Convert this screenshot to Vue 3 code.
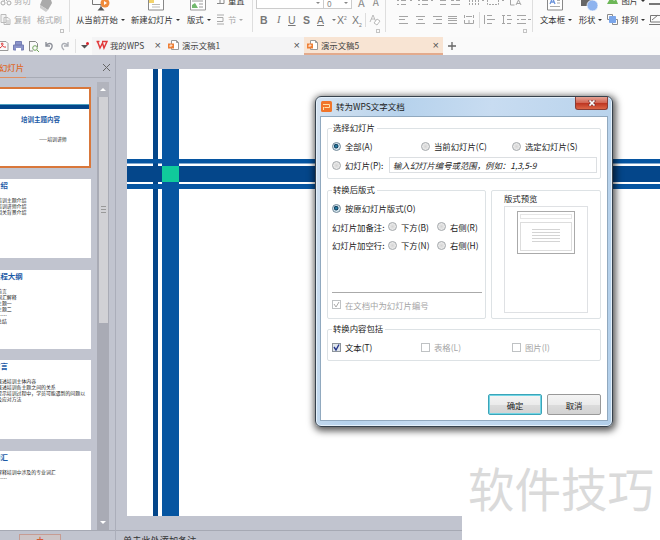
<script setup>
import { ref } from 'vue';

const range = ref('all');
const layout = ref('origin');
const includeText = ref(true);

const ranges = [
    { id: 'all', label: '全部(A)' },
    { id: 'current', label: '当前幻灯片(C)' },
    { id: 'selected', label: '选定幻灯片(S)' },
];

const placements = [
    { title: '幻灯片加备注:', options: ['下方(B)', '右侧(R)'] },
    { title: '幻灯片加空行:', options: ['下方(N)', '右侧(H)'] },
];

const thumbs = [
    { title: '介绍', lines: ['培训主题介绍', '培训讲师介绍', '相关背景介绍'] },
    { title: '课程大纲', lines: ['前言', '词汇解释', '主题一', '主题二', '……', '总结'] },
    { title: '前言', lines: ['概述培训主体内容', '概述培训各主题之间的关系', '提示培训过程中，学员可能遇到的问题以', '及应对方法'] },
    { title: '词汇', lines: ['解释培训中涉及的专业词汇', '……'] },
];
</script>

<template>
    <div class="app">
        <header class="ribbon">
            <section class="group clip">
                <div class="small-col">
                    <div class="small-item muted">
                        <svg width="12" height="12" viewBox="0 0 12 12" fill="none" stroke="#aaa">
                            <path d="M4 7 9 0M7 7 2 0" /><circle cx="3" cy="9" r="2" /><circle cx="9" cy="9" r="2" />
                        </svg>
                        <span>剪切</span>
                    </div>
                    <div class="small-item muted">
                        <svg width="12" height="12" viewBox="0 0 12 12" fill="none" stroke="#bbb">
                            <path d="M1 1.500h5v8H1zM4 4.500h4l2 2v5H4zM6 8h3M6 10h3" fill="#f4f4f4" />
                        </svg>
                        <span>复制</span>
                    </div>
                </div>
                <div class="big-item muted painter">
                    <svg width="20" height="13" viewBox="0 0 20 13">
                        <path d="M5 0h9l1 3-4 7-8-5z" fill="#aaa" /><path d="m3 5 8 5-2 2-6-4z" fill="#ccc" />
                    </svg>
                    <span>格式刷</span>
                </div>
                <i class="launcher"></i>
            </section>

            <section class="group slides">
                <div class="big-item start">
                    <svg width="24" height="13" viewBox="0 0 24 13">
                        <path d="M2.500 0v4.500h14M11 4v4" fill="none" stroke="#777" /><path d="m7.500 10.500 3.500-4 3.500 4z" fill="#555" />
                        <circle cx="15" cy="3" r="4.500" fill="#ef8b3c" /><path d="M14 1v4l3-2z" fill="#fff" />
                    </svg>
                    <span>从当前开始<b class="caret"></b></span>
                </div>
                <div class="big-item new-slide">
                    <svg width="18" height="13" viewBox="0 0 18 13" fill="none">
                        <path d="M1.500-2v12h15V-2" stroke="#888" fill="#fff" /><path d="M2 0h5v3H2z" fill="#f3d36b" /><path d="M5 4.500h8M5 7h8" stroke="#bbb" />
                    </svg>
                    <span>新建幻灯片<b class="caret"></b></span>
                </div>
                <div class="big-item layout-btn">
                    <svg width="18" height="13" viewBox="0 0 18 13" fill="none">
                        <path d="M1.500-2v12h15V-2" stroke="#999" fill="#fff" /><path d="M3 8V5l3-2 3 5z" fill="#72b96d" /><path d="M3 1h11M10 4h4M10 7h4" stroke="#9a9a9a" />
                    </svg>
                    <span>版式<b class="caret"></b></span>
                </div>
                <div class="small-col">
                    <div class="small-item">
                        <svg width="9" height="12" viewBox="0 0 9 12" fill="none" stroke="#888"><path d="M0 1.500h7v8H0M0 5h7M3 2v8" /></svg>
                        <span>重置</span>
                    </div>
                    <div class="small-item muted">
                        <svg width="9" height="12" viewBox="0 0 9 12" fill="none" stroke="#aaa"><path d="M0 2h7M0 4.500h6v4H0M0 11h7" /></svg>
                        <span>节<b class="caret"></b></span>
                    </div>
                </div>
            </section>

            <section class="group font">
                <div class="font-top">
                    <span class="combo family"><b class="caret"></b></span>
                    <span class="combo size">0<b class="caret"></b></span>
                    <span class="letter">A</span>
                    <span class="letter small">A</span>
                </div>
                <div class="font-row">
                    <b>B</b><i class="serif">I</i><u>U</u><b>S</b><u>A</u><b class="caret"></b>
                    <span>X<sup>2</sup></span><span>X<sub>2</sub></span>
                    <svg width="18" height="14" viewBox="0 0 18 14" fill="none" stroke="#bbb">
                        <path d="M1.500 0v14" stroke="#ddd" /><path d="m6 9 3-7 3 7M7 6h4" /><path d="m10 10 3-4 3 2-3 4z" fill="#fff" />
                    </svg>
                </div>
                <i class="launcher"></i>
            </section>

            <section class="group para">
                <svg width="136" height="32" viewBox="0 0 136 32" fill="none" stroke="#a5a5a5">
                    <path d="M1 .5h2M1 4.500h2M5 .5h5M5 4.500h5M22 .5h2M22 4.500h2M26 .5h6M26 4.500h6M44 .5h6M44 4.500h6M55 .5h3M60 .5h4M55 4.500h9" />
                    <path d="M73.500 0v5M76.500 0v5M79.500 0v5M82.500 0v5M91.500 0v4.500h11V0" stroke-dasharray="2 1" />
                    <path d="M114.500 0v5h4M120 5l2.500-5 2.500 5M121 3.500h3M14 .5h2M35 .5h2M86 .5h2M106 .5h2" />
                    <path d="M3 16.500h9M3 19.500h6M3 23.500h9M20 16.500h9M22 19.500h5M20 23.500h9M37 16.500h9M40 19.500h6M37 23.500h9M52 16.500h9M52 18.500h9M52 20.500h9M52 23.500h9" />
                    <path d="M68.500 15v3M77.500 15v3M70 16.500h6M68.500 20v3.500h9V20M73 20v3" />
                    <path d="M83.500 12v16" stroke="#ddd" />
                    <path d="M88.500 15v9M91 15.500h5M91 19.500h8M91 23.500h5M106 15.500h3M106 23.500h3M107.500 16v7M111 15.500h4M111 19.500h5M111 23.500h4M121 15.500h9M121 19.500h2M125 19.500h5M121 23.500h9M132 19.500h3" />
                </svg>
                <i class="launcher"></i>
            </section>

            <section class="group insert">
                <div class="big-item textbox">
                    <svg width="18" height="13" viewBox="0 0 18 13" fill="none">
                        <path d="M1.500-2v12h15V-2" stroke="#888" fill="#fff" /><path d="m4 4 2.500-6L9 4M5 2h3" stroke="#6c94dc" stroke-width="1.300" /><path d="M11 .5h3M11 3h3M4 6.500h10" stroke="#aaa" />
                    </svg>
                    <span>文本框<b class="caret"></b></span>
                </div>
                <div class="big-item shapes">
                    <svg width="20" height="13" viewBox="0 0 20 13">
                        <path d="M2 0h11v6H2z" fill="#666" /><circle cx="13.500" cy="5.500" r="5.500" fill="#8fb4ef" stroke="#fff" stroke-width=".7" />
                    </svg>
                    <span>形状<b class="caret"></b></span>
                </div>
                <div class="small-col arrange">
                    <div class="small-item">
                        <svg width="12" height="12" viewBox="0 0 12 12"><path d="M0 10 4 3l3 4 2-2 2 5z" fill="#6db758" /></svg>
                        <span>图片<b class="caret"></b></span>
                    </div>
                    <div class="small-item">
                        <svg width="12" height="12" viewBox="0 0 12 12" fill="none" stroke="#8b8b8b"><path d="M.5 1.500h5v5h-5zM5.500 6.500h5v5h-5z" /><path d="M2.500 3.500h6v6h-6z" fill="#7ba6ea" stroke="#7ba6ea" /></svg>
                        <span>排列<b class="caret"></b></span>
                    </div>
                </div>
                <svg class="outline-icon" width="11" height="28" viewBox="0 0 11 28" fill="none" stroke="#777">
                    <path d="M0 4h11" stroke-width="2" /><path d="M11 15.500H1.500V22H11M3 20l6-5M0 24.500h11" />
                </svg>
            </section>
        </header>

        <nav class="tabs">
            <div class="quick">
                <svg width="72" height="14" viewBox="0 0 72 14" fill="none">
                    <path d="M-1 2.500h7l2 2v7h-9" stroke="#999" /><path d="M0 9c3-2 4-5 2-5s1 5 4 4" stroke="#d33" />
                    <path d="M13.500 6h10v5h-10zM15.500 2.500h6V6h-6z" fill="#8b94c9" stroke="#767fb5" /><path d="M16 9h5v3h-5z" fill="#fff" />
                    <path d="M29.500 2.500h6l2 2V8M33 12h-3.500V2" stroke="#888" /><circle cx="35" cy="9" r="2.300" stroke="#71a35b" /><path d="m37 11 2 2" stroke="#71a35b" />
                    <path d="M46 3v4h4M46 7c2-4 7-3 6 1 0 1-1 2-2 3" stroke="#8c8f98" stroke-width="1.400" />
                    <path d="M68 3v4h-4M68 7c-2-4-7-3-6 1 0 1 1 2 2 3" stroke="#aaadb4" stroke-width="1.400" />
                </svg>
            </div>
            <div class="marker">
                <svg width="12" height="12" viewBox="0 0 12 12"><path d="M1 5h7L4.500 8.500z" fill="#555" /><circle cx="7.500" cy="3.500" r="1.500" fill="#d8232b" /></svg>
            </div>
            <div class="tab home">
                <svg width="12" height="10" viewBox="0 0 12 10" fill="none"><path d="M.5 1.500h3M1.500 1.500 4 8l2.500-5L8 8l3-6.500H6" stroke="#e2393b" stroke-width="1.500" /></svg>
                <span>我的WPS</span><em>×</em>
            </div>
            <div v-for="n in [1, 5]" :key="n" class="tab doc" :class="{ active: n === 5 }">
                <svg width="12" height="12" viewBox="0 0 12 12" fill="none">
                    <path d="M3.500 1.500h5l2 2v7h-7z" fill="#fff" stroke="#999" /><path d="M8.500 1.500v2h2" stroke="#999" /><path d="M0 4.500h6v5H0z" fill="#ee7f35" /><path d="M2 8V6h2v1H2" stroke="#fff" stroke-width=".7" />
                </svg>
                <span>演示文稿{{ n }}</span><em>×</em>
            </div>
            <svg class="plus" width="10" height="10" viewBox="0 0 10 10" stroke="#666" stroke-width="1.300"><path d="M5 1v8M1 5h8" /></svg>
        </nav>

        <main class="workspace">
            <aside class="panel">
                <div class="panel-head">
                    <span>幻灯片</span>
                    <svg width="7" height="7" viewBox="0 0 7 7" stroke="#666"><path d="m0 0 7 7M7 0 0 7" /></svg>
                </div>
                <div class="panel-body">
                    <div class="thumbs">
                        <div class="thumb selected">
                            <div class="band"></div>
                            <h3>培训主题内容</h3>
                            <p>——培训讲师</p>
                        </div>
                        <div v-for="thumb in thumbs" :key="thumb.title" class="thumb">
                            <h4>{{ thumb.title }}</h4>
                            <p v-for="line in thumb.lines" :key="line">{{ line }}</p>
                        </div>
                    </div>
                    <div class="scrollbar">
                        <div class="arrow up"><svg width="6" height="3" viewBox="0 0 6 3"><path d="m0 3 3-3 3 3z" fill="#fff" /></svg></div>
                        <div class="bar"><i></i></div>
                        <div class="arrow down"><svg width="6" height="3" viewBox="0 0 6 3"><path d="m0 0 3 3 3-3z" fill="#fff" /></svg></div>
                    </div>
                </div>
                <div class="panel-foot"><div class="add">+</div></div>
            </aside>
            <section class="stage">
                <div class="slide">
                    <svg width="533" height="447" viewBox="0 0 533 447">
                        <path d="M26 0h5v447h-5zM0 97h533v16H0z" fill="#04468a" />
                        <path d="M35 0h17v447H35zM0 90h533v4.500H0zM0 115h533v5H0z" fill="#0655a1" />
                        <path d="M35 97h17v16H35z" fill="#10ca9b" />
                    </svg>
                </div>
                <div class="notes">单击此处添加备注</div>
            </section>
        </main>

        <div class="watermark"><span>软件技巧</span></div>

        <div class="dialog">
            <div class="titlebar">
                <svg width="11" height="11" viewBox="0 0 11 11" fill="none"><rect width="11" height="11" rx="1.500" fill="#f0752b" /><path d="M2 3.500h6.500v3H3.500M2.500 9V6" stroke="#ffe0a8" /></svg>
                <span>转为WPS文字文档</span>
                <button class="close">
                    <svg width="8" height="6" viewBox="0 0 8 6"><path d="m1 0 6 6M7 0 1 6" stroke="#733" stroke-width="2.800" /><path d="m1.500.5 5 5M6.500.5l-5 5" stroke="#fff" stroke-width="1.700" /></svg>
                </button>
            </div>
            <div class="content">
                <div class="box select-box">
                    <div class="legend">选择幻灯片</div>
                    <div class="three-cols">
                        <label v-for="item in ranges" :key="item.id" @click="range = item.id">
                            <i class="radio" :class="{ on: range === item.id }"></i>{{ item.label }}
                        </label>
                    </div>
                    <div class="input-row">
                        <label><i class="radio"></i>幻灯片(P):</label>
                        <div class="input">输入幻灯片编号或范围，例如：1,3,5-9</div>
                    </div>
                </div>

                <div class="middle">
                    <div class="box layout-box">
                        <div class="legend">转换后版式</div>
                        <label class="origin" @click="layout = 'origin'"><i class="radio" :class="{ on: layout === 'origin' }"></i>按原幻灯片版式(O)</label>
                        <div v-for="row in placements" :key="row.title" class="placement">
                            <span>{{ row.title }}</span>
                            <label v-for="option in row.options" :key="option"><i class="radio"></i>{{ option }}</label>
                        </div>
                        <div class="rule"></div>
                        <label class="disabled"><i class="check"><svg width="7" height="7" viewBox="0 0 7 7" fill="none" stroke="#aaa"><path d="m1 3 2 3 3-5" /></svg></i>在文档中为幻灯片编号</label>
                    </div>
                    <div class="box preview-box">
                        <span>版式预览</span>
                        <div class="preview">
                            <div class="mini">
                                <div class="mini-title"></div>
                                <div class="mini-body"><div class="mini-lines"></div></div>
                            </div>
                        </div>
                    </div>
                </div>

                <div class="box include-box">
                    <div class="legend">转换内容包括</div>
                    <div class="three-cols">
                        <label @click="includeText = !includeText">
                            <i class="check strong"><svg v-if="includeText" width="7" height="7" viewBox="0 0 7 7" fill="none" stroke="#25358a" stroke-width="1.400"><path d="m1 3 2 3 3-5.500" /></svg></i>文本(T)
                        </label>
                        <label class="disabled"><i class="check"></i>表格(L)</label>
                        <label class="disabled"><i class="check"></i>图片(I)</label>
                    </div>
                </div>

                <div class="actions">
                    <button class="btn primary">确定</button>
                    <button class="btn">取消</button>
                </div>
            </div>
        </div>
    </div>
</template>

<style>
body {
    overflow: hidden;
}
</style>

<style scoped>
* {
    box-sizing: border-box;
}

svg {
    display: block;
    flex: none;
}

.app {
    position: relative;
    display: flex;
    flex-direction: column;
    width: 660px;
    height: 540px;
    overflow: hidden;
    background: #c1c4cf;
    color: #333;
    font: 8.4px/12px "Noto Sans CJK SC", sans-serif;
    white-space: nowrap;
}

/* ribbon */
.ribbon {
    display: flex;
    flex: none;
    height: 37px;
    background: #fbfbfb;
}

.group {
    position: relative;
    display: flex;
    flex: none;
    height: 32px;
    border-right: 1px solid #dedede;
}

.clip { width: 70px; }
.slides { width: 183px; }
.font { width: 133px; flex-direction: column; }
.para { width: 147px; padding-left: 10px; }
.insert { width: 127px; border: 0; }

.launcher {
    position: absolute;
    right: 5px;
    bottom: -1px;
    width: 4px;
    height: 4px;
    border: 1px solid #c4c4c4;
}

.small-col {
    display: flex;
    flex-direction: column;
    gap: 7px;
    margin-top: -6px;
}

.small-item {
    display: flex;
    align-items: center;
    height: 12px;
    gap: 2px;
}

.muted { color: #aaa; }

.big-item {
    display: flex;
    flex-direction: column;
    align-items: flex-start;
}

.painter { margin-left: 6px; }
.start { width: 55px; margin-left: 6px; }
.new-slide { width: 56px; }
.start svg { margin-left: 14px; }
.new-slide svg { margin-left: 16px; }
.layout-btn { width: 30px; }
.layout-btn svg { margin-left: 2px; }
.textbox { width: 39px; margin-left: 7px; }
.textbox svg { margin-left: 6px; }
.shapes { width: 29px; }
.arrange { width: 42px; }

.caret {
    display: inline-block;
    margin-left: 3px;
    vertical-align: 2px;
    border: 2px solid transparent;
    border-top: 2px solid currentColor;
    border-bottom: 0;
}

.font-top {
    display: flex;
    height: 13px;
    padding-left: 3px;
    color: #888;
}

.combo {
    display: flex;
    align-items: center;
    justify-content: space-between;
    height: 13px;
    margin-top: -4px;
    padding: 0 3px;
    border: 1px solid #ccc;
    border-left-width: 0;
    background: #fff;
}

.family { width: 68px; border-left-width: 1px; justify-content: flex-end; }
.size { width: 28px; }
.letter { margin: -4px 0 0 6px; font-size: 11px; }
.letter.small { margin-left: 8px; font-size: 10px; }

.font-row {
    display: grid;
    grid-template-columns: 15px 13px 15px 14px 12px 8px 15px 12px 18px;
    align-items: center;
    height: 14px;
    padding-left: 7px;
    color: #777;
    font: 10.5px/14px "Liberation Sans", sans-serif;
}

.serif { padding-left: 2px; font-family: "Liberation Serif", serif; }
.font-row sup, .font-row sub { font-size: 5px; line-height: 0; }
.font-row > .caret { width: 4px; }

/* document tabs */
.tabs {
    display: flex;
    align-items: center;
    flex: none;
    height: 18px;
    background: #fafafa;
}

.quick { width: 76px; border-right: 1px solid #e2e2e2; }
.marker { width: 16px; padding-left: 4px; }

.tab {
    display: flex;
    align-items: center;
    height: 18px;
    padding-bottom: 2px;
    background: #f4f4f5;
    color: #444;
}

.tab em {
    margin-left: auto;
    color: #555;
    font: 11px/14px "Liberation Sans", sans-serif;
}

.home { width: 73px; padding-left: 4px; padding-right: 4px; }
.home span { margin-left: 2px; }
.doc { width: 139px; padding-left: 3px; padding-right: 4px; }
.doc span { margin-left: 2px; }

.active {
    padding-bottom: 0;
    background: #f8e4d3;
    border-bottom: 2px solid #e3aa8c;
}

.plus { margin-left: 4px; }

/* slide list */
.workspace {
    display: flex;
    flex: none;
    height: 485px;
}

.panel {
    display: flex;
    flex-direction: column;
    flex: none;
    width: 116px;
    border-right: 1px solid #abaeba;
    overflow: hidden;
}

.panel-head {
    display: flex;
    align-items: center;
    justify-content: space-between;
    height: 23px;
    margin-right: 4px;
    padding: 3px 1px 0 0;
    border-bottom: 1px solid;
    border-image: linear-gradient(90deg, #df9063 27px, #a8abb5 27px) 1;
}

.panel-head span {
    margin-left: -1px;
    color: #df6a28;
    font-weight: 500;
}

.panel-body {
    display: flex;
    height: 453px;
    overflow: hidden;
}

.thumbs {
    display: flex;
    flex-direction: column;
    gap: 11.5px;
    width: 91px;
    padding-top: 9px;
}

.thumb {
    flex: none;
    height: 79px;
    background: #fff;
    color: #222;
    font-size: 4.9px;
    line-height: 6px;
}

.thumb h4 {
    margin: 2px 0 8px -7px;
    color: #1b5aa6;
    font-size: 7.4px;
    line-height: 8px;
}

.thumb p { margin: 0 0 0 -3px; }

.thumb.selected {
    height: 81px;
    padding-top: 15px;
    border: 2px solid #d9773a;
    border-left: 0;
}

.band {
    height: 5px;
    border-top: 1px solid #4da0c0;
    background: #04468a;
}

.selected h3 {
    margin: 6px 0 12px 21px;
    color: #1b5aa6;
    font-size: 6.5px;
    line-height: 9px;
}

.selected p { margin-left: 39px; }

.scrollbar {
    display: flex;
    flex-direction: column;
    align-items: center;
    width: 12px;
    margin: 4px 0 0 6px;
    background: #a9abb5;
}

.arrow {
    display: grid;
    place-items: center;
    flex: none;
    width: 12px;
    height: 15px;
}

.up { background: #b2b4bd; }
.down { margin-top: auto; }

.bar {
    display: grid;
    place-items: center;
    flex: none;
    width: 9px;
    height: 226px;
    background: #d1d1d5;
}

.bar i {
    width: 5px;
    height: 7px;
    background: repeating-linear-gradient(#999 0 1px, transparent 1px 3px);
}

.panel-foot {
    flex: none;
    height: 10px;
    padding: 3px 0 0 19px;
    border-top: 1px solid #a6a9b4;
}

.add {
    width: 42px;
    height: 16px;
    border: 1px solid #c69c93;
    background: #cdc5c7;
    color: #d55a34;
    font: 13px/10px "Liberation Sans", sans-serif;
    text-align: center;
}

/* slide canvas */
.stage {
    flex: 1;
    padding: 14px 0 0 11px;
}

.slide {
    height: 447px;
    background: #fff;
}

.notes {
    margin: 14px 0 0 -11px;
    padding: 1px 0 0 7px;
    border-top: 1px solid #a6a9b4;
    font-size: 9.2px;
    line-height: 16px;
}

.watermark {
    position: absolute;
    left: 462px;
    bottom: 0;
    width: 198px;
    height: 79px;
    padding-left: 6px;
    background: #fff;
    color: #dadada;
    font-size: 46.5px;
    line-height: 52px;
}

/* dialog window */
.dialog {
    position: absolute;
    left: 315px;
    top: 96px;
    width: 298px;
    height: 331px;
    padding: 0 4px;
    border: 1px solid #36414c;
    border-radius: 6px;
    background: linear-gradient(100deg, #d5e2f0, #b6d2ec 25%, #c8dcf1 50%, #b2cfea);
    box-shadow: inset 0 0 0 1px #e4f0fa, 1px 2px 7px 2px rgba(0, 0, 0, .65);
    color: #222;
}

.titlebar {
    display: flex;
    align-items: center;
    height: 19px;
    padding-left: 1px;
}

.titlebar span {
    margin: -1px 0 0 4px;
    font-size: 8.5px;
}

.close {
    display: grid;
    place-items: center;
    align-self: flex-start;
    width: 33px;
    height: 13px;
    margin-left: auto;
    padding: 0;
    border: 1px solid #873d36;
    border-top: 0;
    border-radius: 0 0 3px 3px;
    background: linear-gradient(#e6a294, #d26553 48%, #bd3521 52%, #dc6647);
}

.content {
    height: 305px;
    padding: 11px 6px 0;
    border: 1px solid #91a9bf;
    background: #fff;
}

.box {
    border: 1px solid #dde2e5;
    border-radius: 2px;
}

.legend {
    width: fit-content;
    margin: -8px 0 0 4px;
    padding: 0 2px 0 1px;
    background: #fff;
}

.content label {
    display: flex;
    align-items: center;
    height: 12px;
}

.radio {
    width: 9px;
    height: 9px;
    flex: none;
    margin-right: 4px;
    border: 1px solid #a3a7aa;
    border-radius: 50%;
    background: radial-gradient(#d4d4d4, #f7f7f7);
}

.radio.on {
    border-color: #6f8797;
    background: radial-gradient(circle at 45% 45%, #2d9cc5 0, #163f5e 35%, #d8e8f0 50%);
}

.check {
    display: grid;
    place-items: center;
    flex: none;
    width: 9px;
    height: 9px;
    margin-right: 4px;
    border: 1px solid #bfc2c4;
}

.check.strong {
    border-color: #8d949b;
    background: #e1e7ec;
}

.disabled { color: #a5a5a5; }

.three-cols {
    display: grid;
    grid-template-columns: 89px 91px auto;
    padding-left: 4px;
}

.select-box { height: 51px; }
.select-box .three-cols { margin-top: 7px; }

.input-row {
    display: flex;
    align-items: center;
    margin-top: 5px;
    padding-left: 4px;
}

.input-row label { width: 57px; }

.input {
    width: 208px;
    height: 16px;
    padding-left: 3px;
    border: 1px solid #dcdfe2;
    font-style: italic;
    line-height: 14px;
}

.middle {
    display: flex;
    gap: 5px;
    margin-top: 11px;
}

.layout-box {
    width: 160px;
    height: 129px;
    padding-left: 4px;
}

.layout-box .legend { margin-left: 0; }
.origin { margin-top: 7px; }

.placement {
    display: grid;
    grid-template-columns: 56px 49px auto;
    align-items: center;
    margin-top: 6.7px;
}

.rule {
    width: 150px;
    margin-top: 40.6px;
    border-top: 1px solid #aaa;
}

.layout-box .disabled { margin-top: 6px; }

.preview-box {
    width: 110px;
    height: 129px;
    padding: 1px 0 0 11.5px;
}

.preview-box > span { display: block; }

.preview {
    width: 84px;
    height: 107px;
    margin-top: 2px;
    padding: 4px 0 0 12px;
    border: 1px solid #dfe1e4;
}

.mini {
    width: 58px;
    height: 43px;
    padding: 2px;
    border: 1px solid #aaa;
}

.mini-title {
    height: 5px;
    border: 1px solid #e6e6e6;
}

.mini-body {
    height: 29px;
    margin-top: 3px;
    padding: 6px 11px;
    border: 1px solid #ddd;
}

.mini-lines {
    height: 14px;
    background: repeating-linear-gradient(#d4d4d4 0 1px, transparent 1px 3px);
}

.include-box {
    height: 32px;
    margin-top: 10px;
}

.include-box .three-cols { margin-top: 7px; }

.actions {
    display: flex;
    justify-content: flex-end;
    gap: 5px;
    margin-top: 33px;
}

.btn {
    width: 54px;
    height: 21px;
    padding: 0;
    border: 1px solid #999;
    border-radius: 2px;
    background: linear-gradient(#f4f4f4, #ebebeb 50%, #dcdcdc 51%, #d2d2d2);
    color: #222;
    font: inherit;
}

.btn.primary {
    border-color: #3ba4b8;
    box-shadow: inset 0 0 0 1px #72d5e5;
}
</style>
